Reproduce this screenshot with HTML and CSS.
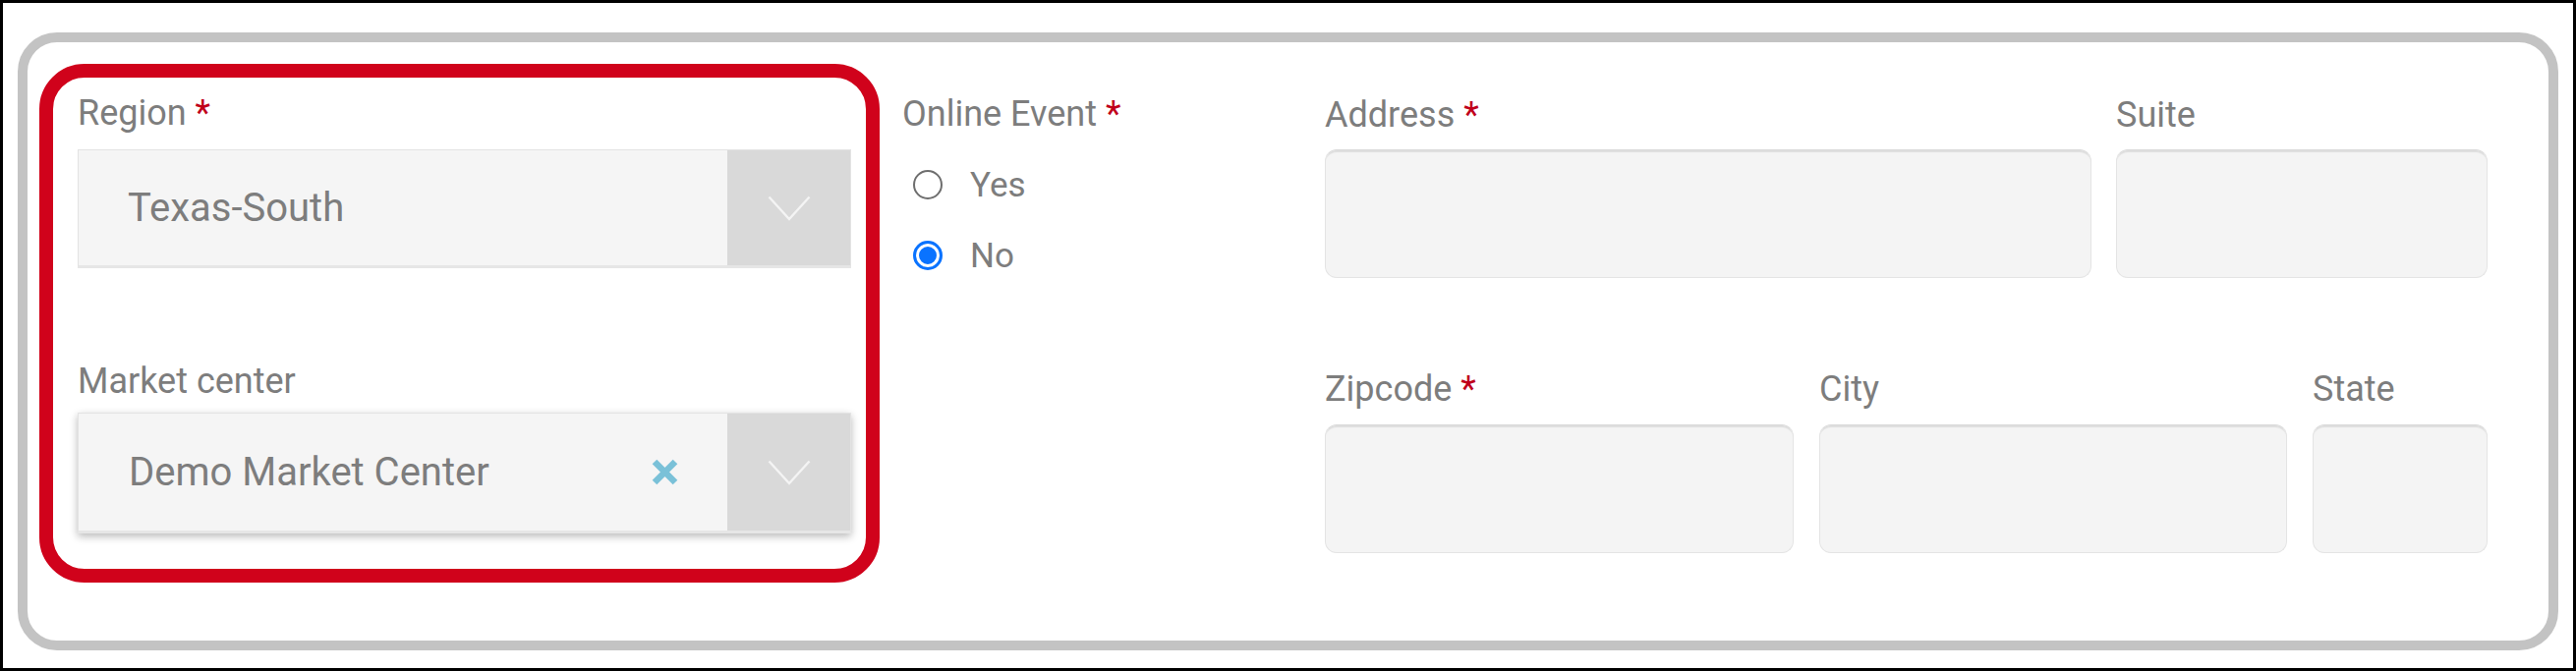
FILE: index.html
```html
<!DOCTYPE html>
<html lang="en">
<head>
<meta charset="utf-8">
<title>Event location form</title>
<link rel="stylesheet" href="styles.css">
</head>
<body>
<div class="frame">
  <div class="panel">
    <div class="highlight">
      <div class="field-label">Region <span class="req">*</span></div>
      <div class="select">
        <div class="select-value">Texas-South</div>
        <div class="select-arrow">
          <svg width="44" height="26" viewBox="0 0 44 26"><polyline points="1.5,1.5 22,24 42.5,1.5" fill="none" stroke="#f4f4f4" stroke-width="2.4"/></svg>
        </div>
      </div>
      <div class="field-label market-label">Market center</div>
      <div class="select select-raised">
        <div class="select-value">Demo Market Center</div>
        <div class="select-clear">
          <svg width="29" height="29" viewBox="0 0 29 29"><path d="M4 4 L25 25 M25 4 L4 25" stroke="#7ac1d8" stroke-width="6.5" stroke-linecap="butt"/></svg>
        </div>
        <div class="select-arrow">
          <svg width="44" height="26" viewBox="0 0 44 26"><polyline points="1.5,1.5 22,24 42.5,1.5" fill="none" stroke="#f4f4f4" stroke-width="2.4"/></svg>
        </div>
      </div>
    </div>

    <div class="online-col">
      <div class="field-label">Online Event <span class="req">*</span></div>
      <div class="radio-row">
        <span class="radio"></span>
        <span class="radio-text">Yes</span>
      </div>
      <div class="radio-row">
        <span class="radio radio-checked"></span>
        <span class="radio-text">No</span>
      </div>
    </div>

    <div class="address-col">
      <div class="row">
        <div class="field w-address">
          <div class="field-label">Address <span class="req">*</span></div>
          <div class="input"></div>
        </div>
        <div class="field w-suite">
          <div class="field-label">Suite</div>
          <div class="input"></div>
        </div>
      </div>
      <div class="row row-second">
        <div class="field w-zip">
          <div class="field-label">Zipcode <span class="req">*</span></div>
          <div class="input"></div>
        </div>
        <div class="field w-city">
          <div class="field-label">City</div>
          <div class="input"></div>
        </div>
        <div class="field w-state">
          <div class="field-label">State</div>
          <div class="input"></div>
        </div>
      </div>
    </div>
  </div>
</div>
</body>
</html>
```

FILE: styles.css
```css
* { box-sizing: border-box; }

html, body {
  margin: 0;
  padding: 0;
  background: #ffffff;
}

body {
  font-family: Roboto, "Liberation Sans", Arial, sans-serif;
  color: #7d7d7d;
}

.frame {
  width: 2621px;
  height: 683px;
  border: 3px solid #000000;
  padding: 30px 15px 18px 15px;
}

.panel {
  height: 100%;
  border: 10px solid #c3c3c3;
  border-radius: 40px;
  padding: 22px 62px 0 12px;
  display: flex;
  align-items: flex-start;
}

.highlight {
  width: 855px;
  flex: none;
  border: 14px solid #d0021b;
  border-radius: 46px;
  padding: 15px 15px 36px 25px;
}

.field-label {
  font-size: 36px;
  line-height: 42px;
  height: 42px;
  color: #7d7d7d;
  margin-bottom: 16px;
  white-space: nowrap;
}

.req {
  color: #c0001a;
}

.select {
  height: 121px;
  display: flex;
  align-items: stretch;
  background: #f5f5f5;
  border: 1px solid #e3e3e3;
  border-bottom: 3px solid #e6e6e6;
}

.select-value {
  flex: 1;
  display: flex;
  align-items: center;
  padding-left: 50px;
  font-size: 40px;
  color: #7d7d7d;
}

.select-arrow {
  width: 125px;
  flex: none;
  background: #d9d9d9;
  display: flex;
  align-items: center;
  justify-content: center;
}

.select-clear {
  display: flex;
  align-items: center;
  margin-right: 49px;
}

.market-label {
  margin-top: 94px;
  margin-bottom: 11px;
}

.select-raised {
  height: 123px;
  box-shadow: 0 3px 8px rgba(0, 0, 0, 0.28);
}

.select-raised .select-value {
  padding-left: 51px;
}

.online-col {
  width: 430px;
  flex: none;
  margin-left: 23px;
  padding-top: 30px;
}

.online-col .field-label {
  margin-bottom: 15px;
}

.radio-row {
  height: 72px;
  display: flex;
  align-items: center;
  padding-left: 11px;
}

.radio {
  width: 30px;
  height: 30px;
  border-radius: 50%;
  border: 2.5px solid #6e6e6e;
  background: #ffffff;
  flex: none;
}

.radio-checked {
  border: 3px solid #0a73ff;
  box-shadow: inset 0 0 0 3px #ffffff, inset 0 0 0 20px #0a73ff;
}

.radio-text {
  margin-left: 28px;
  font-size: 35px;
  color: #7d7d7d;
}

.address-col {
  flex: 1;
  padding-top: 31px;
}

.row {
  display: flex;
  gap: 25px;
}

.row-second {
  margin-top: 92px;
  gap: 26px;
}

.address-col .field-label {
  margin-bottom: 14px;
}

.row-second .field-label {
  margin-bottom: 15px;
}

.w-address { width: 780px; }
.w-suite { width: 378px; }
.w-zip { width: 477px; }
.w-city { width: 476px; }
.w-state { width: 178px; }

.input {
  height: 131px;
  background: #f4f4f4;
  border: 1px solid #e4e4e4;
  border-top: 1px solid #d9d9d9;
  border-radius: 12px;
  box-shadow: inset 0 3px 1px -1px #dedede;
}
```
